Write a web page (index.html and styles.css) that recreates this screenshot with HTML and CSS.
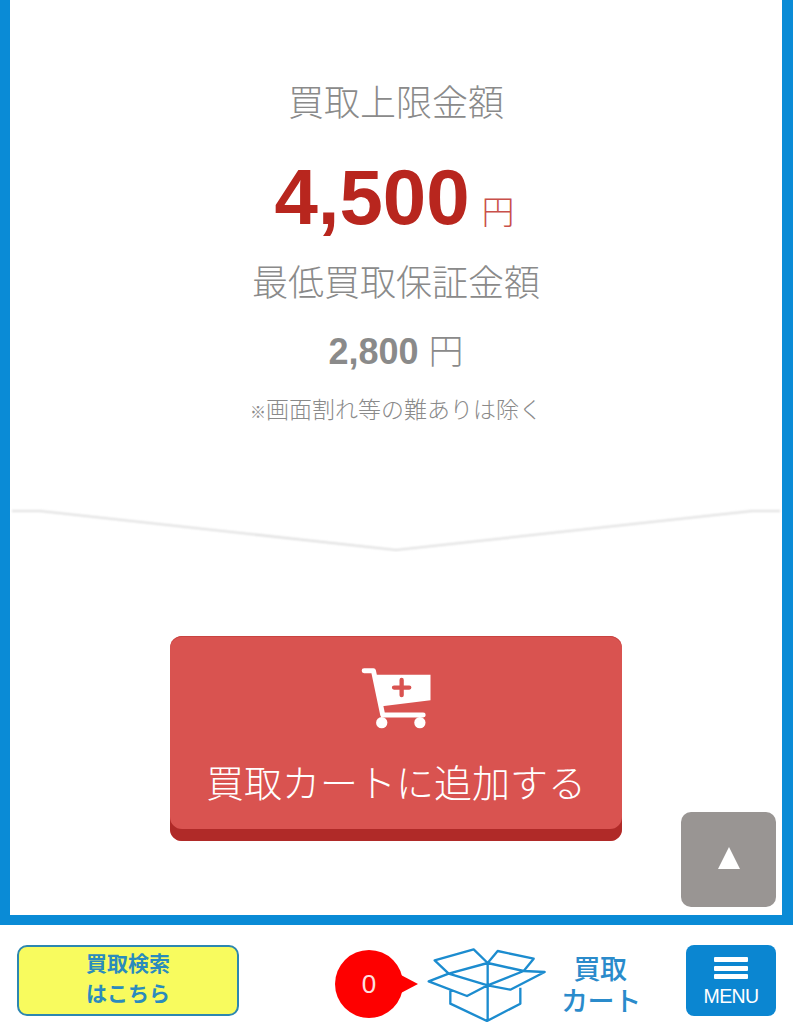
FILE: index.html
```html
<!DOCTYPE html>
<html lang="ja">
<head>
  <meta charset="UTF-8" />
  <meta name="viewport" content="width=device-width, initial-scale=1.0"/>
  <title>買取上限金額</title>
  <link rel="stylesheet" href="styles.css">
</head>
<body>

  <main class="panel">
    <div class="price-block">
      <div class="label">買取上限金額</div>
      <div class="max-price"><span class="max-num">4,500</span><span class="max-yen">円</span></div>
      <div class="label">最低買取保証金額</div>
      <div class="min-price"><span class="min-num">2,800</span><span class="min-yen">円</span></div>
      <p class="note"><span class="note-mark">※</span>画面割れ等の難ありは除く</p>
    </div>

    <svg class="divider" viewBox="0 0 772 46" preserveAspectRatio="none">
      <defs>
        <filter id="soft"><feGaussianBlur stdDeviation="0.8"/></filter>
      </defs>
      <path d="M2 5 L30 5 L386 44 L742 5 L770 5" fill="none" stroke="#d6d6d6" stroke-width="1.6" filter="url(#soft)"/>
    </svg>

    <a href="#" class="add-button">
      <svg class="cart-icon" viewBox="600 125 216 190">
        <path d="M612 136 H640 L668 270 H790" fill="none" stroke="#fff" stroke-width="15" stroke-linecap="round" stroke-linejoin="round"/>
        <path d="M648 148 H812 V225 L666 243 Z" fill="#fff"/>
        <circle cx="665" cy="293" r="17" fill="#fff"/>
        <circle cx="780" cy="293" r="17" fill="#fff"/>
        <path d="M725 164 V210 M702 187 H748" stroke="#d95350" stroke-width="13" stroke-linecap="round"/>
      </svg>
      <span class="add-text">買取カートに追加する</span>
    </a>

    <a href="#" class="to-top"></a>
  </main>

  <footer class="bottom-bar">
    <a href="#" class="search-button">買取検索<br>はこちら</a>
    <div class="cart-count">0</div>
    <svg class="box-icon" viewBox="80 140 360 225">
      <path d="M262 188 L145 220 L103 180 L220 147 Z M262 188 L292 152 L400 175 L370 212 Z M262 188 L370 212 L262 255 L145 220 M145 220 L85 243 L200 287 L262 255 L330 268 L433 215 L370 212 M150 265 V310 L260 362 L360 310 V262 M262 188 V362" fill="none" stroke="#1c8ccf" stroke-width="7" stroke-linejoin="round"/>
    </svg>
    <a href="#" class="cart-link">買取<br>カート</a>
    <a href="#" class="menu-button">
      <span class="menu-bar"></span>
      <span class="menu-bar"></span>
      <span class="menu-bar"></span>
      <span class="menu-text">MENU</span>
    </a>
  </footer>

</body>
</html>
```

FILE: styles.css
```css
* {
  margin: 0;
  padding: 0;
  box-sizing: border-box;
}

body {
  font-family: 'Liberation Sans', 'Noto Sans CJK JP', sans-serif;
  background: #fff;
  height: 1024px;
  overflow: hidden;
}

a {
  text-decoration: none;
}

.panel {
  position: relative;
  height: 925px;
  border-style: solid;
  border-color: #0a8bd6;
  border-width: 0 11px 10px 10px;
  background: #fff;
  display: flex;
  flex-direction: column;
  align-items: center;
}

.price-block {
  width: 100%;
  padding-top: 79px;
  text-align: center;
  color: #8a8a8a;
}

.label {
  font-size: 36px;
  line-height: 50px;
  font-weight: 300;
}

.max-price {
  height: 128px;
  line-height: 136px;
  margin-bottom: 2px;
  padding-right: 3px;
}

.max-num {
  font-size: 78px;
  font-weight: bold;
  color: #b8261e;
}

.max-yen {
  font-size: 33px;
  font-weight: 300;
  color: #c9504a;
  margin-left: 12px;
}

.min-price {
  height: 84px;
  line-height: 86px;
}

.min-num {
  font-size: 36px;
  font-weight: bold;
}

.min-yen {
  font-size: 35px;
  font-weight: 300;
  margin-left: 10px;
}

.note {
  font-size: 23px;
  line-height: 34px;
  font-weight: 300;
}

.note-mark {
  font-size: 16px;
  font-weight: 500;
}

.divider {
  display: block;
  width: 772px;
  height: 46px;
  margin-top: 76px;
}

.add-button {
  margin-top: 84px;
  width: 452px;
  height: 205px;
  background: #d95350;
  border-radius: 12px;
  box-shadow: inset 0 -12px 0 #b02a28, inset 0 1px 0 #c94340;
  display: flex;
  flex-direction: column;
  align-items: center;
  color: #fff;
}

.cart-icon {
  width: 72px;
  height: 63px;
  margin-top: 31px;
}

.add-text {
  font-size: 38px;
  line-height: 50px;
  font-weight: 300;
  margin-top: 29px;
}

.to-top {
  position: absolute;
  right: 6px;
  bottom: 8px;
  width: 95px;
  height: 95px;
  border-radius: 10px;
  background: #999593;
  display: flex;
  align-items: center;
  justify-content: center;
}

.to-top::before {
  content: "";
  border-left: 11.5px solid transparent;
  border-right: 11.5px solid transparent;
  border-bottom: 22px solid #fff;
  margin-bottom: 3px;
}

.bottom-bar {
  display: flex;
  align-items: flex-start;
  height: 99px;
  padding: 20px 0 0 17px;
}

.search-button {
  width: 222px;
  height: 71px;
  border: 2px solid #2d87b0;
  border-radius: 10px;
  background: #f8fb5e;
  color: #2a8bbd;
  font-size: 21px;
  font-weight: bold;
  line-height: 30px;
  text-align: center;
  padding-top: 2px;
}

.cart-count {
  position: relative;
  margin: 5px 0 0 96px;
  width: 68px;
  height: 68px;
  border-radius: 50%;
  background: #fe0000;
  color: #fde0e0;
  font-size: 26px;
  line-height: 68px;
  text-align: center;
}

.cart-count::after {
  content: "";
  position: absolute;
  left: 64px;
  top: 24px;
  border-left: 19px solid #fe0000;
  border-top: 10px solid transparent;
  border-bottom: 10px solid transparent;
}

.box-icon {
  width: 120px;
  height: 75px;
  margin: 2px 0 0 24px;
}

.cart-link {
  width: 78px;
  margin: 9px 0 0 14px;
  color: #2a8bcb;
  font-size: 27px;
  font-weight: 500;
  line-height: 32px;
  letter-spacing: -0.4px;
  text-align: center;
  white-space: nowrap;
}

.menu-button {
  margin-left: 47px;
  width: 90px;
  height: 71px;
  border-radius: 8px;
  background: #0b86d1;
  color: #fff;
  display: flex;
  flex-direction: column;
  align-items: center;
  padding-top: 12px;
  gap: 3.5px;
}

.menu-bar {
  width: 34px;
  height: 5px;
  border-radius: 1px;
  background: #fff;
}

.menu-text {
  font-size: 19.5px;
  line-height: 26px;
  letter-spacing: -0.6px;
}
```
